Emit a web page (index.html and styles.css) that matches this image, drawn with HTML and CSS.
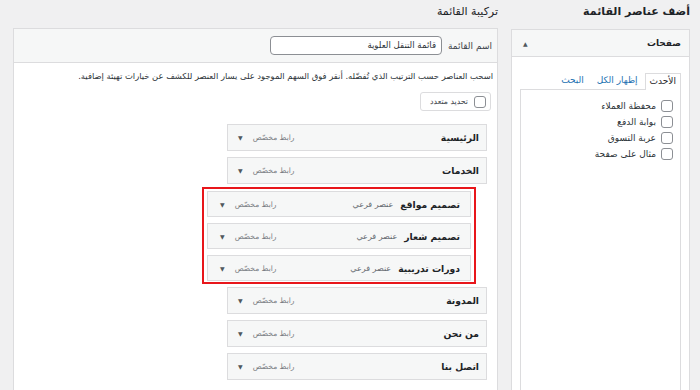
FILE: index.html
```html
<!DOCTYPE html>
<html lang="ar" dir="rtl">
<head>
<meta charset="utf-8">
<title>القوائم</title>
<link rel="stylesheet" href="styles.css">
</head>
<body>
<div class="wrap">
  <aside class="side">
    <h2 class="col-title side-title">أضف عناصر القائمة</h2>
    <div class="side-box">
      <div class="side-head">
        <span class="side-head-title">صفحات</span>
        <span class="up-arrow">▲</span>
      </div>
      <div class="side-body">
        <div class="tabs">
          <span class="tab active">الأحدث</span>
          <a class="tab link">إظهار الكل</a>
          <a class="tab link">البحث</a>
        </div>
        <div class="tab-panel">
          <label class="check-row"><span class="cb"></span><span>محفظة العملاء</span></label>
          <label class="check-row"><span class="cb"></span><span>بوابة الدفع</span></label>
          <label class="check-row"><span class="cb"></span><span>عربة التسوق</span></label>
          <label class="check-row"><span class="cb"></span><span>مثال على صفحة</span></label>
        </div>
      </div>
    </div>
  </aside>
  <main class="main">
    <h2 class="col-title main-title">تركيبة القائمة</h2>
    <div class="main-box">
      <div class="main-head">
        <span class="name-label">اسم القائمة</span>
        <span class="name-input">قائمة التنقل العلوية</span>
      </div>
      <div class="main-body">
        <p class="desc">اسحب العناصر حسب الترتيب الذي تُفضّله. أنقر فوق السهم الموجود على يسار العنصر للكشف عن خيارات تهيئة إضافية.</p>
        <div class="multi"><span class="cb"></span><span>تحديد متعدد</span></div>
        <ul class="menu">
          <li class="item"><span class="item-title">الرئيسية</span><span class="item-ctrl"><span class="item-type">رابط مخصّص</span><span class="down">▼</span></span></li>
          <li class="item"><span class="item-title">الخدمات</span><span class="item-ctrl"><span class="item-type">رابط مخصّص</span><span class="down">▼</span></span></li>
          <li class="sub-group">
            <div class="item sub"><span class="item-title">تصميم مواقع</span><span class="sub-tag">عنصر فرعي</span><span class="item-ctrl"><span class="item-type">رابط مخصّص</span><span class="down">▼</span></span></div>
            <div class="item sub"><span class="item-title">تصميم شعار</span><span class="sub-tag">عنصر فرعي</span><span class="item-ctrl"><span class="item-type">رابط مخصّص</span><span class="down">▼</span></span></div>
            <div class="item sub"><span class="item-title">دورات تدريبية</span><span class="sub-tag">عنصر فرعي</span><span class="item-ctrl"><span class="item-type">رابط مخصّص</span><span class="down">▼</span></span></div>
          </li>
          <li class="item"><span class="item-title">المدونة</span><span class="item-ctrl"><span class="item-type">رابط مخصّص</span><span class="down">▼</span></span></li>
          <li class="item"><span class="item-title">من نحن</span><span class="item-ctrl"><span class="item-type">رابط مخصّص</span><span class="down">▼</span></span></li>
          <li class="item"><span class="item-title">اتصل بنا</span><span class="item-ctrl"><span class="item-type">رابط مخصّص</span><span class="down">▼</span></span></li>
        </ul>
      </div>
    </div>
  </main>
</div>
</body>
</html>
```
FILE: styles.css
```css
* { box-sizing: border-box; }
html, body { margin: 0; padding: 0; }
body {
  direction: rtl;
  background: #f0f0f1;
  font-family: "DejaVu Sans", sans-serif;
  color: #1d2327;
  font-size: 10px;
  height: 390px;
  overflow: hidden;
}
.wrap {
  display: flex;
  gap: 13px;
  height: 390px;
  padding: 0 10px 0 13px;
}
.side { width: 179px; flex: none; display: flex; flex-direction: column; }
.main { flex: 1; display: flex; flex-direction: column; }
.col-title {
  margin: 0;
  flex: none;
  line-height: 24px;
  font-size: 11px;
  font-weight: bold;
  color: #1d2327;
}
.main-title { height: 28px; font-weight: normal; }
.side-title { height: 29px; }

/* sidebar */
.side-box {
  flex: 1;
  border: 1px solid #dcdcde;
  border-bottom: none;
  background: #fff;
  overflow: hidden;
}
.side-head {
  height: 27px;
  background: #f6f7f7;
  border-bottom: 1px solid #dcdcde;
  display: flex;
  align-items: center;
  justify-content: space-between;
  padding: 0 8px 0 11px;
}
.side-head-title { font-weight: bold; font-size: 9px; }
.up-arrow { font-size: 6px; color: #50575e; }
.side-body { padding: 15px 8px 0 8px; height: calc(100% - 27px); display: flex; flex-direction: column; }
.tabs {
  display: flex;
  align-items: flex-end;
  height: 17px;
  font-size: 9px;
  flex: none;
}
.tab { line-height: 15px; }
.tab.active {
  border: 1px solid #dcdcde;
  border-bottom: none;
  background: #fff;
  padding: 0 4px;
  height: 17px;
  margin-bottom: -1px;
  position: relative;
  color: #1d2327;
}
.tab.link { color: #2271b1; margin-right: 7px; margin-bottom: 1px; }
.tab.link + .tab.link { margin-right: 13px; }
.tab-panel {
  flex: 1;
  border: 1px solid #dcdcde;
  border-bottom: none;
  padding: 8px 7px 0 0;
}
.check-row {
  display: flex;
  align-items: center;
  gap: 5px;
  height: 16px;
  font-size: 9px;
  color: #2c3338;
}
.cb {
  width: 12px;
  height: 12px;
  border: 1px solid #8c8f94;
  border-radius: 3px;
  background: #fff;
  flex: none;
}

/* main */
.main-box {
  flex: 1;
  border: 1px solid #dcdcde;
  border-bottom: none;
  background: #fff;
  overflow: hidden;
}
.main-head {
  height: 34px;
  background: #f6f7f7;
  border-bottom: 1px solid #dcdcde;
  display: flex;
  align-items: center;
  gap: 6px;
  padding: 0 5px 0 0;
}
.name-label { font-size: 9px; color: #3c434a; }
.name-input {
  width: 172px;
  height: 19px;
  border: 1px solid #8c8f94;
  border-radius: 4px;
  background: #fff;
  font-size: 8.6px;
  line-height: 17px;
  padding: 0 5px;
  color: #2c3338;
}
.main-body { padding: 6px 4px 0 0; }
.desc {
  margin: 0;
  font-size: 8.4px;
  line-height: 14px;
  color: #2c3338;
  white-space: nowrap;
}
.multi {
  display: inline-flex;
  align-items: center;
  gap: 6px;
  margin: 9px 2px 0 0;
  height: 19px;
  width: 71px;
  border: 1px solid #dcdcde;
  border-radius: 3px;
  padding: 0 4px;
  font-size: 7.8px;
  white-space: nowrap;
  color: #3c434a;
  background: #fff;
}
.menu {
  list-style: none;
  margin: 13px 0 0 0;
  padding: 0;
}
.item {
  display: flex;
  align-items: center;
  height: 27px;
  width: 260px;
  margin: 0 6px 6px 0;
  border: 1px solid #dcdcde;
  background: #f6f7f7;
  padding: 0 7px 0 10px;
}
.item-title { font-weight: bold; font-size: 9.2px; color: #1d2327; }
.sub-tag { font-size: 8px; color: #646970; margin-right: 7px; }
.item-ctrl {
  margin-right: auto;
  display: flex;
  align-items: center;
  gap: 10px;
}
.item-type { font-size: 7.5px; color: #787c82; }
.down { font-size: 6px; color: #50575e; }
.sub-group {
  width: 274px;
  margin: -3px 17px 3px 0;
  border: 2px solid #e8161b;
  padding: 2px 3px 1px 3px;
}
.item.sub {
  width: 100%;
  height: 26px;
  margin: 0 0 6px 0;
  padding: 0 10px 0 12px;
}
.item.sub:last-child { margin-bottom: 0; }
```
